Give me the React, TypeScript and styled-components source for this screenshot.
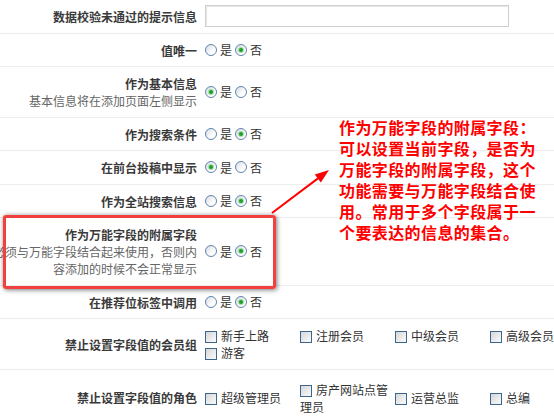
import styled, { createGlobalStyle } from 'styled-components'

const GlobalStyle = createGlobalStyle`
  body {
    margin: 0;
    background: #fff;
    font-family: "Noto Sans CJK SC", "Noto Sans", sans-serif;
    font-size: 12px;
    color: #333;
  }
`

const Page = styled.div`
  position: relative;
  width: 554px;
  height: 419px;
  overflow: hidden;
  background: #fff;
`

const Form = styled.div`
  margin-left: -20px;
  width: 720px;
`

const Row = styled.div<{ $top?: number }>`
  display: flex;
  align-items: center;
  border-bottom: 1px solid #ececec;
  padding-top: ${({ $top }) => $top ?? 0}px;
`

const LabelCell = styled.div`
  width: 225px;
  flex-shrink: 0;
  box-sizing: border-box;
  padding: 8px 8px 7.5px 0;
  text-align: right;
  line-height: 17px;
`

const Title = styled.span`
  font-weight: bold;
  color: #3a3a3a;
`

const Hint = styled.span`
  display: block;
  color: #666;
`

const FieldCell = styled.div`
  display: flex;
  align-items: center;
  line-height: 17px;
`

const TextInput = styled.input`
  box-sizing: border-box;
  width: 304px;
  height: 22px;
  margin: 0;
  border: 1px solid #cfcfcf;
  box-shadow: inset 1px 1px 1px #e6e6e6;
  background: #fff;
`

const RadioOption = styled.label`
  display: flex;
  align-items: center;
  gap: 3px;
  margin-right: 3px;
`

const RadioDot = styled.span<{ $checked?: boolean }>`
  position: relative;
  width: 12px;
  height: 12px;
  box-sizing: border-box;
  border-radius: 50%;
  border: 1px solid #5f84ad;
  background: linear-gradient(135deg, #d9dde2 0%, #fff 70%);

  &::after {
    content: '';
    display: ${({ $checked }) => ($checked ? 'block' : 'none')};
    position: absolute;
    left: 3px;
    top: 3px;
    width: 4px;
    height: 4px;
    border-radius: 50%;
    background: #1fa02c;
    box-shadow: 0 0 1px 1px #9fd9a4;
  }
`

const CheckList = styled.div`
  display: flex;
  flex-wrap: wrap;
  align-items: center;
  flex-shrink: 0;
  width: 380px;
  padding: 8px 0 7.5px;
  line-height: 17px;
`

const CheckItem = styled.label`
  width: 95px;
`

const CheckBox = styled.span`
  display: inline-block;
  vertical-align: -2px;
  width: 12px;
  height: 12px;
  box-sizing: border-box;
  margin-right: 4px;
  border: 1px solid #3b6690;
  background: linear-gradient(135deg, #d6d6d6 0%, #f4f4f4 80%);
`

const Highlight = styled.div`
  position: absolute;
  left: 3px;
  top: 215px;
  width: 273px;
  height: 74px;
  box-sizing: border-box;
  border: 3px solid #f2403f;
  border-radius: 3px;
  box-shadow: 0 0 4px rgba(0, 0, 0, 0.35), 2px 2px 4px rgba(0, 0, 0, 0.25);
  pointer-events: none;
`

const Arrow = styled.svg`
  position: absolute;
  left: 268px;
  top: 164px;
  overflow: visible;
`

const Note = styled.div`
  position: absolute;
  left: 339px;
  top: 117px;
  color: #ff0000;
  font-size: 16px;
  font-weight: bold;
  letter-spacing: 0.4px;
  line-height: 21px;
  white-space: nowrap;
`

const Radios = ({ yes }: { yes: boolean }) => (
  <FieldCell>
    <RadioOption>
      <RadioDot $checked={yes} />是
    </RadioOption>
    <RadioOption>
      <RadioDot $checked={!yes} />否
    </RadioOption>
  </FieldCell>
)

const Checks = ({ items }: { items: string[] }) => (
  <CheckList>
    {items.map((t) => (
      <CheckItem key={t}>
        <CheckBox />
        {t}
      </CheckItem>
    ))}
  </CheckList>
)

export default function App() {
  return (
    <Page>
      <GlobalStyle />
      <Form>
        <Row>
          <LabelCell>
            <Title>数据校验未通过的提示信息</Title>
          </LabelCell>
          <FieldCell>
            <TextInput type="text" />
          </FieldCell>
        </Row>
        <Row>
          <LabelCell>
            <Title>值唯一</Title>
          </LabelCell>
          <Radios yes={false} />
        </Row>
        <Row>
          <LabelCell>
            <Title>作为基本信息</Title>
            <Hint>基本信息将在添加页面左侧显示</Hint>
          </LabelCell>
          <Radios yes />
        </Row>
        <Row>
          <LabelCell>
            <Title>作为搜索条件</Title>
          </LabelCell>
          <Radios yes={false} />
        </Row>
        <Row>
          <LabelCell>
            <Title>在前台投稿中显示</Title>
          </LabelCell>
          <Radios yes />
        </Row>
        <Row>
          <LabelCell>
            <Title>作为全站搜索信息</Title>
          </LabelCell>
          <Radios yes={false} />
        </Row>
        <Row>
          <LabelCell>
            <Title>作为万能字段的附属字段</Title>
            <Hint>
              必须与万能字段结合起来使用，否则内
              <br />
              容添加的时候不会正常显示
            </Hint>
          </LabelCell>
          <Radios yes={false} />
        </Row>
        <Row>
          <LabelCell>
            <Title>在推荐位标签中调用</Title>
          </LabelCell>
          <Radios yes={false} />
        </Row>
        <Row>
          <LabelCell>
            <Title>禁止设置字段值的会员组</Title>
          </LabelCell>
          <Checks items={['新手上路', '注册会员', '中级会员', '高级会员', '游客']} />
        </Row>
        <Row $top={3}>
          <LabelCell>
            <Title>禁止设置字段值的角色</Title>
          </LabelCell>
          <Checks items={['超级管理员', '房产网站点管理员', '运营总监', '总编']} />
        </Row>
      </Form>

      <Highlight />
      <Arrow width="66" height="54" viewBox="0 0 66 54">
        <line x1="4" y1="49" x2="50" y2="14.4" stroke="#f00" strokeWidth="2" />
        <polygon points="61,6 52.8,18.4 46.8,10.4" fill="#f00" />
      </Arrow>
      <Note>
        作为万能字段的附属字段：
        <br />
        可以设置当前字段，是否为
        <br />
        万能字段的附属字段，这个
        <br />
        功能需要与万能字段结合使
        <br />
        用。常用于多个字段属于一
        <br />
        个要表达的信息的集合。
      </Note>
    </Page>
  )
}
